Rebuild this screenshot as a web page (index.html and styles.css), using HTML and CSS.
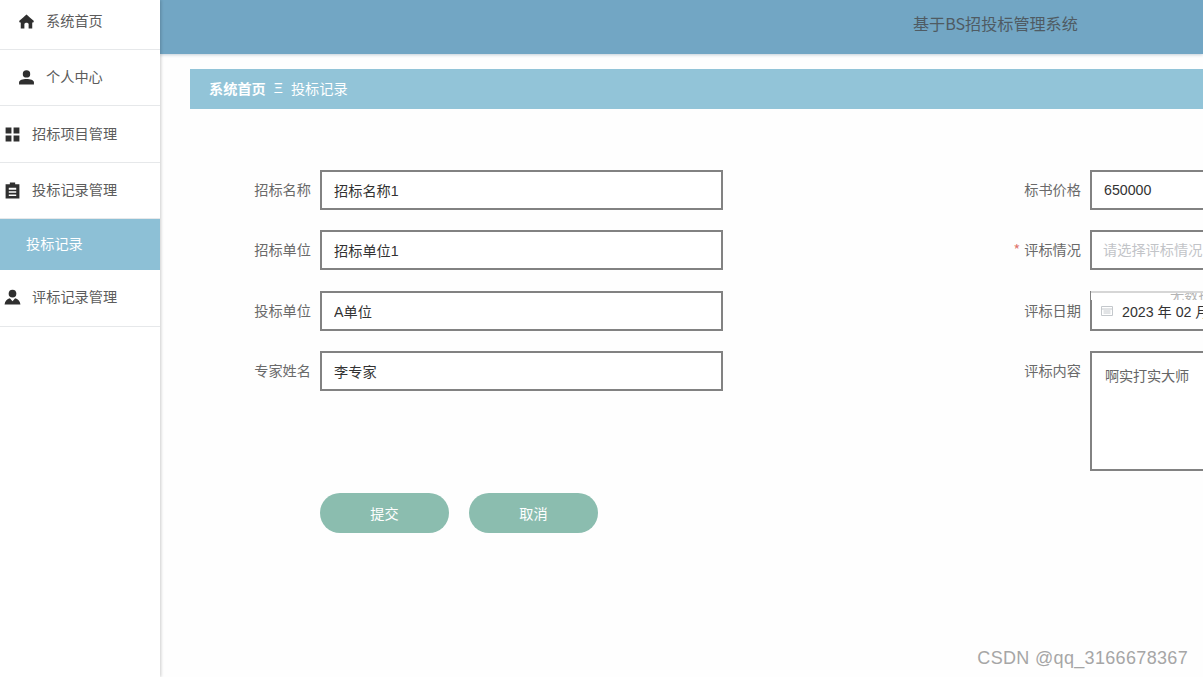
FILE: index.html
```html
<!DOCTYPE html>
<html lang="zh-CN">
<head>
<meta charset="utf-8">
<title>基于BS招投标管理系统</title>
<link rel="stylesheet" href="styles.css">
</head>
<body>
<div class="app">
  <aside class="sidebar">
    <a class="menu-item first indent">
      <svg class="icon" viewBox="0 0 16 16"><path d="M8 1.5C9.5 3 12.5 5.5 15 7.6L14.4 9H13.4V14.5H10V10.5C10 9.8 9 9.2 8 9.2S6 9.8 6 10.5V14.5H2.6V9H1.6L1 7.6C3.5 5.5 6.5 3 8 1.5Z"/></svg>
      <span class="label-text">系统首页</span>
    </a>
    <a class="menu-item indent">
      <svg class="icon" viewBox="0 0 16 16"><circle cx="8" cy="4.6" r="3.5"/><path d="M1 14.5V12.6C1 10.4 4.5 9.4 8 9.4S15 10.4 15 12.6V14.5Z"/></svg>
      <span class="label-text">个人中心</span>
    </a>
    <a class="menu-item">
      <svg class="icon" viewBox="0 0 16 16"><path d="M1.5 1.5H7V7H1.5ZM9 1.5H14.5V7H9ZM1.5 9H7V14.5H1.5ZM9 9H14.5V14.5H9Z"/></svg>
      <span class="label-text">招标项目管理</span>
    </a>
    <a class="menu-item">
      <svg class="icon" viewBox="0 0 16 16"><path fill-rule="evenodd" d="M5.5 0.5H10.5V2H14.5V15.5H1.5V2H5.5ZM4.5 5.5V7.2H11.5V5.5ZM4.5 8.7V10.2H11.5V8.7ZM4.5 11.7V13.2H11.5V11.7Z"/></svg>
      <span class="label-text">投标记录管理</span>
    </a>
    <a class="menu-item active"><span class="label-text">投标记录</span></a>
    <a class="menu-item">
      <svg class="icon" viewBox="0 0 16 16"><circle cx="8" cy="4.4" r="3.6"/><path d="M0.5 14.5C1 11 3 9 5.5 8.6L8 11.5 10.5 8.6C13 9 15 11 15.5 14.5Z"/></svg>
      <span class="label-text">评标记录管理</span>
    </a>
  </aside>
  <main class="main">
    <header class="topbar"><h1 class="title">基于BS招投标管理系统</h1></header>
    <nav class="crumbs"><b>系统首页</b><span class="sep">Ξ</span><span>投标记录</span></nav>
    <form class="form">
      <div class="field"><label>招标名称</label><input class="control" value="招标名称1" readonly></div>
      <div class="field"><label>标书价格</label><input class="control" value="650000" readonly></div>
      <div class="field"><label>招标单位</label><input class="control" value="招标单位1" readonly></div>
      <div class="field"><label><i class="req">*</i>评标情况</label><input class="control pick" placeholder="请选择评标情况" readonly></div>
      <div class="field"><label>投标单位</label><input class="control" value="A单位" readonly></div>
      <div class="field"><label>评标日期</label>
        <div class="date">
          <input class="control dateinput" value="2023 年 02 月 13 日" readonly>
          <svg class="cal" viewBox="0 0 12 12"><path d="M0.5 1.5H11.5V10.5H0.5ZM0.5 4H11.5M2.5 6H9.5M2.5 8H9.5" fill="none" stroke="#c4c8cc"/></svg>
          <div class="ghost"><span class="ghost-text">无数据</span></div>
        </div>
      </div>
      <div class="field"><label>专家姓名</label><input class="control" value="李专家" readonly></div>
      <div class="field"><label>评标内容</label><textarea class="control area" readonly>啊实打实大师</textarea></div>
      <div class="actions">
        <button type="button" class="btn">提交</button>
        <button type="button" class="btn">取消</button>
      </div>
    </form>
    <div class="mark">CSDN @qq_3166678367</div>
  </main>
</div>
</body>
</html>
```
FILE: styles.css
```css
* { box-sizing: border-box; }
html, body { margin: 0; height: 100%; overflow: hidden; }
body {
  background: #fefefe;
  color: #555;
  font: 14.2px "Liberation Sans", "Noto Sans CJK SC", sans-serif;
}
.app { display: flex; width: 1203px; height: 677px; overflow: hidden; }

.sidebar {
  flex: 0 0 160px;
  background: #fff;
  box-shadow: 1px 0 3px rgba(0, 0, 0, .2);
  position: relative;
  z-index: 2;
}
.menu-item {
  display: flex;
  align-items: center;
  height: 56.4px;
  padding-left: 4px;
  gap: 11px;
  border-bottom: 1px solid #e6e8ea;
  color: #5c5c5c;
  line-height: 20px;
  font-family: "Noto Sans CJK SC", sans-serif;
}
.menu-item.first { height: 50px; padding-bottom: 6px; }
.menu-item.indent { padding-left: 18px; }
.icon { width: 17px; height: 17px; fill: #2f2f2f; flex: none; }
.label-text { margin-top: -3px; }
.menu-item.active {
  height: 51px;
  padding-left: 26px;
  background: #8dc0d6;
  color: #fff;
  border-bottom: 0;
}

.main { flex: 1; min-width: 0; position: relative; }
.topbar {
  display: flex;
  align-items: center;
  height: 54px;
  padding-left: 753px;
  padding-bottom: 8px;
  background: #72a6c4;
  box-shadow: 0 1px 3px rgba(60, 100, 130, .3);
}
.title {
  margin: 0;
  font: 400 16.1px "Noto Sans CJK SC", sans-serif;
  color: #4f5b63;
  white-space: nowrap;
}
.crumbs {
  display: flex;
  align-items: center;
  height: 40px;
  margin: 15px 0 0 30px;
  padding: 0 0 2px 19px;
  background: #92c4d8;
  color: #fff;
  font-family: "Noto Sans CJK SC", sans-serif;
}
.crumbs .sep { margin: 0 8px; font: 14px "Liberation Sans", sans-serif; }

.form {
  display: grid;
  grid-template-columns: 770px 770px;
  row-gap: 20.33px;
  align-items: start;
  margin: 61px 0 0 60px;
}
.field { display: flex; align-items: flex-start; }
.field label {
  flex: 0 0 100px;
  padding-right: 9px;
  line-height: 38px;
  text-align: right;
  color: #6a6a6a;
  white-space: nowrap;
  font-family: "Noto Sans CJK SC", sans-serif;
}
.req { margin-right: 4px; font-style: normal; color: #e0746c; }
.control {
  display: block;
  width: 403px;
  height: 40px;
  padding: 0 12px;
  background: #fff;
  border: 2px solid #828282;
  border-radius: 0;
  outline: 0;
  color: #333;
  font: 14.2px "Liberation Sans", "Noto Sans CJK SC", sans-serif;
}
.control::placeholder { color: #c2c4c8; }
.pick { padding-left: 11px; }
.date { position: relative; width: 403px; height: 40px; overflow: hidden; }
.dateinput { padding-left: 30px; }
.cal { position: absolute; left: 11px; top: 14px; width: 12px; height: 12px; }
.ghost {
  position: absolute;
  left: 1px;
  top: 0;
  width: 113px;
  height: 9px;
  overflow: hidden;
  border-top: 2px solid #d6d6d6;
  background: #fff;
}
.ghost-text {
  display: block;
  margin: -9px 0 0 79px;
  color: #b4b4b4;
  line-height: 20px;
  white-space: nowrap;
  font-family: "Noto Sans CJK SC", sans-serif;
}
.area {
  height: 120.5px;
  padding: 12px 13px;
  resize: none;
  line-height: 22px;
  color: #666;
  font-family: serif;
}
.actions { grid-column: 1 / -1; display: flex; gap: 20px; padding: 1px 0 0 100px; }
.btn {
  width: 129px;
  height: 40.5px;
  border: 0;
  border-radius: 20px;
  background: #8bbdaf;
  color: #fff;
  font: 14.2px "Noto Sans CJK SC", sans-serif;
}
.mark {
  position: absolute;
  right: 15px;
  bottom: 8px;
  color: #a6a6a6;
  font: 18px "Liberation Sans", sans-serif;
  letter-spacing: .33px;
  white-space: nowrap;
}
```
